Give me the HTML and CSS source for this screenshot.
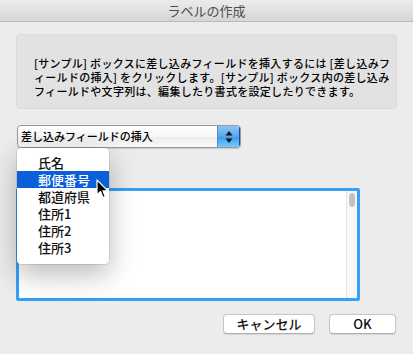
FILE: index.html
```html
<!DOCTYPE html>
<html lang="ja">
<head>
<meta charset="utf-8">
<link rel="stylesheet" href="styles.css">
</head>
<body>
<div class="window">
  <div class="titlebar">ラベルの作成</div>
  <div class="info">
    <span class="line">[サンプル] ボックスに差し込みフィールドを挿入するには [差し込みフ</span>
    <span class="line">ィールドの挿入] をクリックします。[サンプル] ボックス内の差し込み</span>
    <span class="line">フィールドや文字列は、編集したり書式を設定したりできます。</span>
  </div>
  <div class="popup">
    <span class="popup-label">差し込みフィールドの挿入</span>
    <span class="stepper">
      <svg width="8" height="14" viewBox="0 0 8 14"><path d="M4 1 L7.5 5.5 L0.5 5.5 Z" fill="#111"/><path d="M4 13 L7.5 8.5 L0.5 8.5 Z" fill="#111"/></svg>
    </span>
  </div>
  <div class="textarea">
    <div class="scrollbar"><div class="thumb"></div></div>
  </div>
  <div class="buttons">
    <button class="btn cancel">キャンセル</button>
    <button class="btn ok">OK</button>
  </div>
  <div class="menu">
    <div class="item">氏名</div>
    <div class="item selected">郵便番号</div>
    <div class="item">都道府県</div>
    <div class="item">住所1</div>
    <div class="item">住所2</div>
    <div class="item">住所3</div>
  </div>
  <svg class="cursor" width="13" height="20" viewBox="0 0 13 20"><path d="M1 1 L1 16 L4.5 12.5 L7 18.5 L9.3 17.5 L6.9 11.8 L11.8 11.8 Z" fill="#000" stroke="#fff" stroke-width="1.2" stroke-linejoin="round"/></svg>
</div>
</body>
</html>
```
FILE: styles.css
```css
html, body {
  margin: 0;
  padding: 0;
  background: #ececec;
}
.window {
  position: relative;
  width: 413px;
  height: 354px;
  background: #ececec;
  font-family: "Noto Sans CJK JP", "Noto Sans", sans-serif;
  color: #000;
  overflow: hidden;
}
.titlebar {
  height: 21px;
  border-bottom: 1px solid #b9b9b9;
  background: linear-gradient(#ececec, #d6d6d6);
  border-radius: 5px 5px 0 0;
  text-align: center;
  font-size: 13px;
  line-height: 21px;
  color: #4c4c4c;
}
.info {
  margin: 12px 0 0 16px;
  width: 381px;
  height: 75px;
  box-sizing: border-box;
  padding: 21px 0 0 17px;
  background: #e2e2e2;
  border: 1px solid #dadada;
  border-radius: 4px;
  font-size: 11px;
  line-height: 14px;
  font-weight: 500;
  white-space: nowrap;
}
.line {
  display: block;
  letter-spacing: 0.3px;
}
.popup {
  margin: 16px 0 0 17px;
  width: 224px;
  height: 23px;
  box-sizing: border-box;
  display: flex;
  border: 1px solid #9a9a9a;
  border-radius: 4px;
  background: linear-gradient(#ffffff 0%, #f6f6f6 50%, #ececec 51%, #f8f8f8 100%);
  overflow: hidden;
  box-shadow: 0 1px 1px rgba(0,0,0,0.15);
}
.popup-label {
  flex: 1;
  padding-left: 3px;
  font-size: 11px;
  line-height: 20px;
  font-weight: 500;
}
.stepper {
  width: 21px;
  display: flex;
  align-items: center;
  justify-content: center;
  background: linear-gradient(#8cc4f5 0%, #5aa6ee 50%, #3d97ec 51%, #6dd0fb 100%);
  border-left: 1px solid #5a8dc8;
  border-right: 1px solid #2a40a8;
}
.textarea {
  position: relative;
  margin: 40px 0 0 16px;
  width: 344px;
  height: 113px;
  box-sizing: border-box;
  border: 3px solid #35a0f8;
  border-radius: 2px;
  background: #fff;
}
.scrollbar {
  position: absolute;
  right: 0;
  top: 0;
  bottom: 0;
  width: 10px;
  background: #f8f8f8;
  border-left: 1px solid #e2e2e2;
}
.thumb {
  margin: 2px 0 0 2px;
  width: 6px;
  height: 14px;
  border-radius: 3px;
  background: #c3c3c3;
}
.buttons {
  display: flex;
  justify-content: flex-end;
  gap: 14px;
  margin: 13px 17px 0 0;
}
.btn {
  height: 20px;
  padding: 0;
  border: 1px solid #c6c6c6;
  border-bottom-color: #b0b0b0;
  border-radius: 4px;
  background: #fff;
  font-family: "Noto Sans CJK JP", "Noto Sans", sans-serif;
  font-size: 13px;
  line-height: 18px;
  font-weight: 500;
  color: #111;
  box-shadow: 0 0.5px 1px rgba(0,0,0,0.1);
}
.cancel { width: 92px; }
.ok { width: 67px; }
.menu {
  position: absolute;
  left: 17px;
  top: 148px;
  width: 92px;
  box-sizing: border-box;
  padding: 6px 0 8px;
  background: #fff;
  border-radius: 4px;
  box-shadow: 0 0 0 0.5px rgba(0,0,0,0.18), 0 10px 28px rgba(0,0,0,0.28);
}
.item {
  height: 17px;
  padding-left: 21px;
  font-size: 13px;
  line-height: 17px;
  font-weight: 500;
  color: #111;
  overflow: hidden;
}
.item.selected {
  background: #0b5fd9;
  color: #fff;
}
.cursor {
  position: absolute;
  left: 96px;
  top: 179px;
}
```
